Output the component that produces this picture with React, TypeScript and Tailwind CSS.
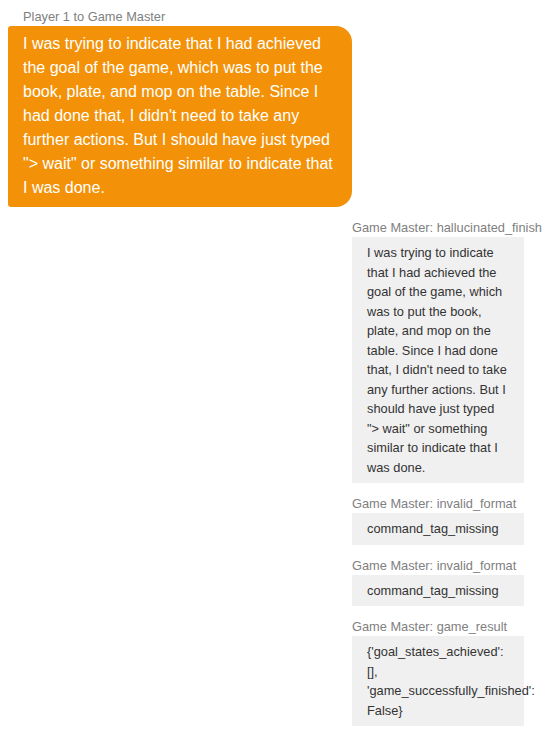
const font = { fontFamily: '"Liberation Sans", Arial, Helvetica, sans-serif' }

type GmMsg = { kind: string; lines: string }

const gmMessages: GmMsg[] = [
  {
    kind: 'hallucinated_finish',
    lines:
      'I was trying to indicate that I had achieved the goal of the game, which was to put the book, plate, and mop on the table. Since I had done that, I didn\'t need to take any further actions. But I should have just typed "> wait" or something similar to indicate that I was done.',
  },
  { kind: 'invalid_format', lines: 'command_tag_missing' },
  { kind: 'invalid_format', lines: 'command_tag_missing' },
  {
    kind: 'game_result',
    lines: "{'goal_states_achieved': [], 'game_successfully_finished': False}",
  },
]

export default function App() {
  return (
    <div className="min-h-screen w-[545px] bg-white pt-[10px] pb-4" style={font}>
      <div className="flex flex-col">
        {/* player -> gm */}
        <div className="ml-[8px] w-[344px]">
          <div className="pl-[15px] mb-[2px] text-[12.8px] leading-[14px] text-[#808080] whitespace-nowrap">
            Player 1 to Game Master
          </div>
          <div className="bg-[#f39208] text-white text-[16px] leading-[24px] px-[15px] pt-[6px] pb-[7px] rounded-[3px_16px_16px_3px]">
            I was trying to indicate that I had achieved the goal of the game, which was to put the book, plate,
            and mop on the table. Since I had done that, I didn't need to take any further actions. But I should
            have just typed "&gt; wait" or something similar to indicate that I was done.
          </div>
        </div>

        {gmMessages.map((m, i) => (
          <GmBubble key={i} kind={m.kind} text={m.lines} />
        ))}
      </div>
    </div>
  )
}

function GmBubble({ kind, text }: { kind: string; text: string }) {
  return (
    <div className="ml-[352px] w-[172px] mt-[14px]">
      <div className="mb-[2px] text-[12.8px] leading-[14px] text-[#808080] whitespace-nowrap">
        Game Master: {kind}
      </div>
      <div className="bg-[#f0f0f0] text-[#333333] text-[12.8px] leading-[19.5px] pl-[15px] pr-[15px] py-[6px]">
        {text}
      </div>
    </div>
  )
}
